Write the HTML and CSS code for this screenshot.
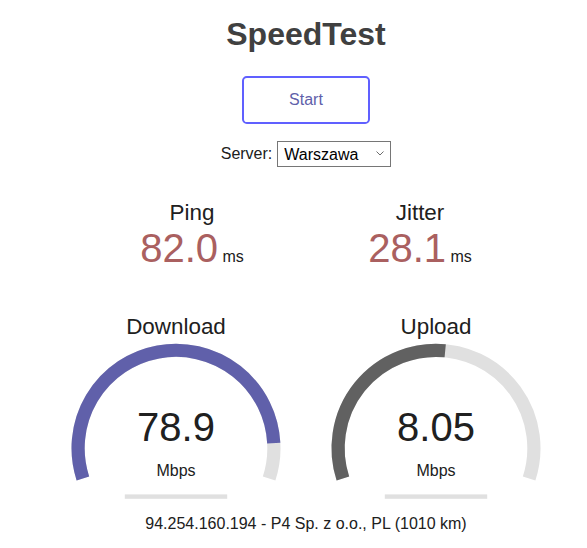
FILE: index.html
```
<!DOCTYPE html>
<html lang="en">
<head>
<meta charset="utf-8">
<title>SpeedTest</title>
<link rel="stylesheet" href="styles.css">
</head>
<body>
<h1 class="title">SpeedTest</h1>
<div class="start-row"><div class="start-btn">Start</div></div>
<div class="server-row"><span class="server-label">Server:</span><span class="select-wrap"><select class="server-select"><option>Warszawa</option></select><svg class="select-arrow" width="8" height="5" viewBox="0 0 8 5"><polyline points="0.5,0.5 4,4 7.5,0.5" fill="none" stroke="#6d6d6d" stroke-width="1"/></svg></span></div>
<div class="test">
  <div class="group">
    <div class="stat">
      <div class="stat-name">Ping</div>
      <div class="stat-value"><span class="stat-num">82.0</span> <span class="stat-unit">ms</span></div>
    </div>
    <div class="stat">
      <div class="stat-name">Jitter</div>
      <div class="stat-value"><span class="stat-num">28.1</span> <span class="stat-unit">ms</span></div>
    </div>
  </div>
  <div class="group">
    <div class="gauge">
      <svg class="gauge-svg" width="256" height="200" viewBox="0 0 256 200">
        <path d="M34.89 166.45 A97.9 97.9 0 1 1 221.11 166.45" fill="none" stroke="#E0E0E0" stroke-width="13.2"/>
        <path d="M34.89 166.45 A97.9 97.9 0 1 1 225.76 131.04" fill="none" stroke="#6060AA" stroke-width="13.2"/>
        <rect x="76.8" y="182.4" width="102.4" height="4.4" fill="#E0E0E0"/>
      </svg>
      <div class="gauge-name">Download</div>
      <div class="gauge-value">78.9</div>
      <div class="gauge-unit">Mbps</div>
    </div>
    <div class="gauge">
      <svg class="gauge-svg" width="256" height="200" viewBox="0 0 256 200">
        <path d="M34.89 166.45 A97.9 97.9 0 1 1 221.11 166.45" fill="none" stroke="#E0E0E0" stroke-width="13.2"/>
        <path d="M34.89 166.45 A97.9 97.9 0 0 1 137.21 38.74" fill="none" stroke="#616161" stroke-width="13.2"/>
        <rect x="76.8" y="182.4" width="102.4" height="4.4" fill="#E0E0E0"/>
      </svg>
      <div class="gauge-name">Upload</div>
      <div class="gauge-value">8.05</div>
      <div class="gauge-unit">Mbps</div>
    </div>
  </div>
</div>
<div class="ip">94.254.160.194 - P4 Sp. z o.o., PL (1010 km)</div>
</body>
</html>
```
FILE: styles.css
```
html, body {
  margin: 0;
  padding: 0;
  background: #FFFFFF;
  color: #202020;
}
body {
  padding-left: 25px;
  text-align: center;
  font-family: "Liberation Sans", Arial, sans-serif;
  font-size: 16px;
}
.title {
  margin: 16px 0 23px;
  font-size: 32px;
  font-weight: bold;
  color: #404040;
}
.start-row {
  display: flex;
  justify-content: center;
}
.start-btn {
  box-sizing: border-box;
  width: 128px;
  height: 48px;
  border: 2.4px solid #6060FF;
  border-radius: 4.8px;
  color: #6060AA;
  display: flex;
  align-items: center;
  justify-content: center;
}
.server-row {
  margin-top: 17px;
  display: flex;
  justify-content: center;
  align-items: center;
  gap: 5px;
}
.select-wrap {
  position: relative;
  display: block;
}
.server-select {
  display: block;
  box-sizing: border-box;
  width: 114px;
  height: 26px;
  font-family: "Liberation Sans", Arial, sans-serif;
  font-size: 16px;
  color: #000;
  background: #fff;
  border: 1px solid #767676;
  border-radius: 0;
  padding: 0 0 0 6px;
  appearance: none;
  -webkit-appearance: none;
  text-align: left;
}
.select-arrow {
  position: absolute;
  right: 7px;
  top: 10px;
  pointer-events: none;
}
.test {
  margin-top: 33px;
}
.group {
  display: flex;
  justify-content: center;
  gap: 4px;
}
.stat {
  width: 224px;
  height: 112px;
}
.stat-name {
  font-size: 22.4px;
}
.stat-num {
  font-size: 40px;
  color: #AA6060;
}
.stat-unit {
  font-size: 16px;
}
.gauge {
  position: relative;
  width: 256px;
  height: 200px;
}
.gauge-svg {
  display: block;
}
.gauge-name {
  position: absolute;
  top: 2.24px;
  left: 0;
  width: 100%;
  font-size: 22.4px;
}
.gauge-value {
  position: absolute;
  bottom: 62px;
  left: 0;
  width: 100%;
  font-size: 40px;
}
.gauge-unit {
  position: absolute;
  bottom: 32px;
  left: 0;
  width: 100%;
}
.ip {
  margin-top: 3px;
}
```
